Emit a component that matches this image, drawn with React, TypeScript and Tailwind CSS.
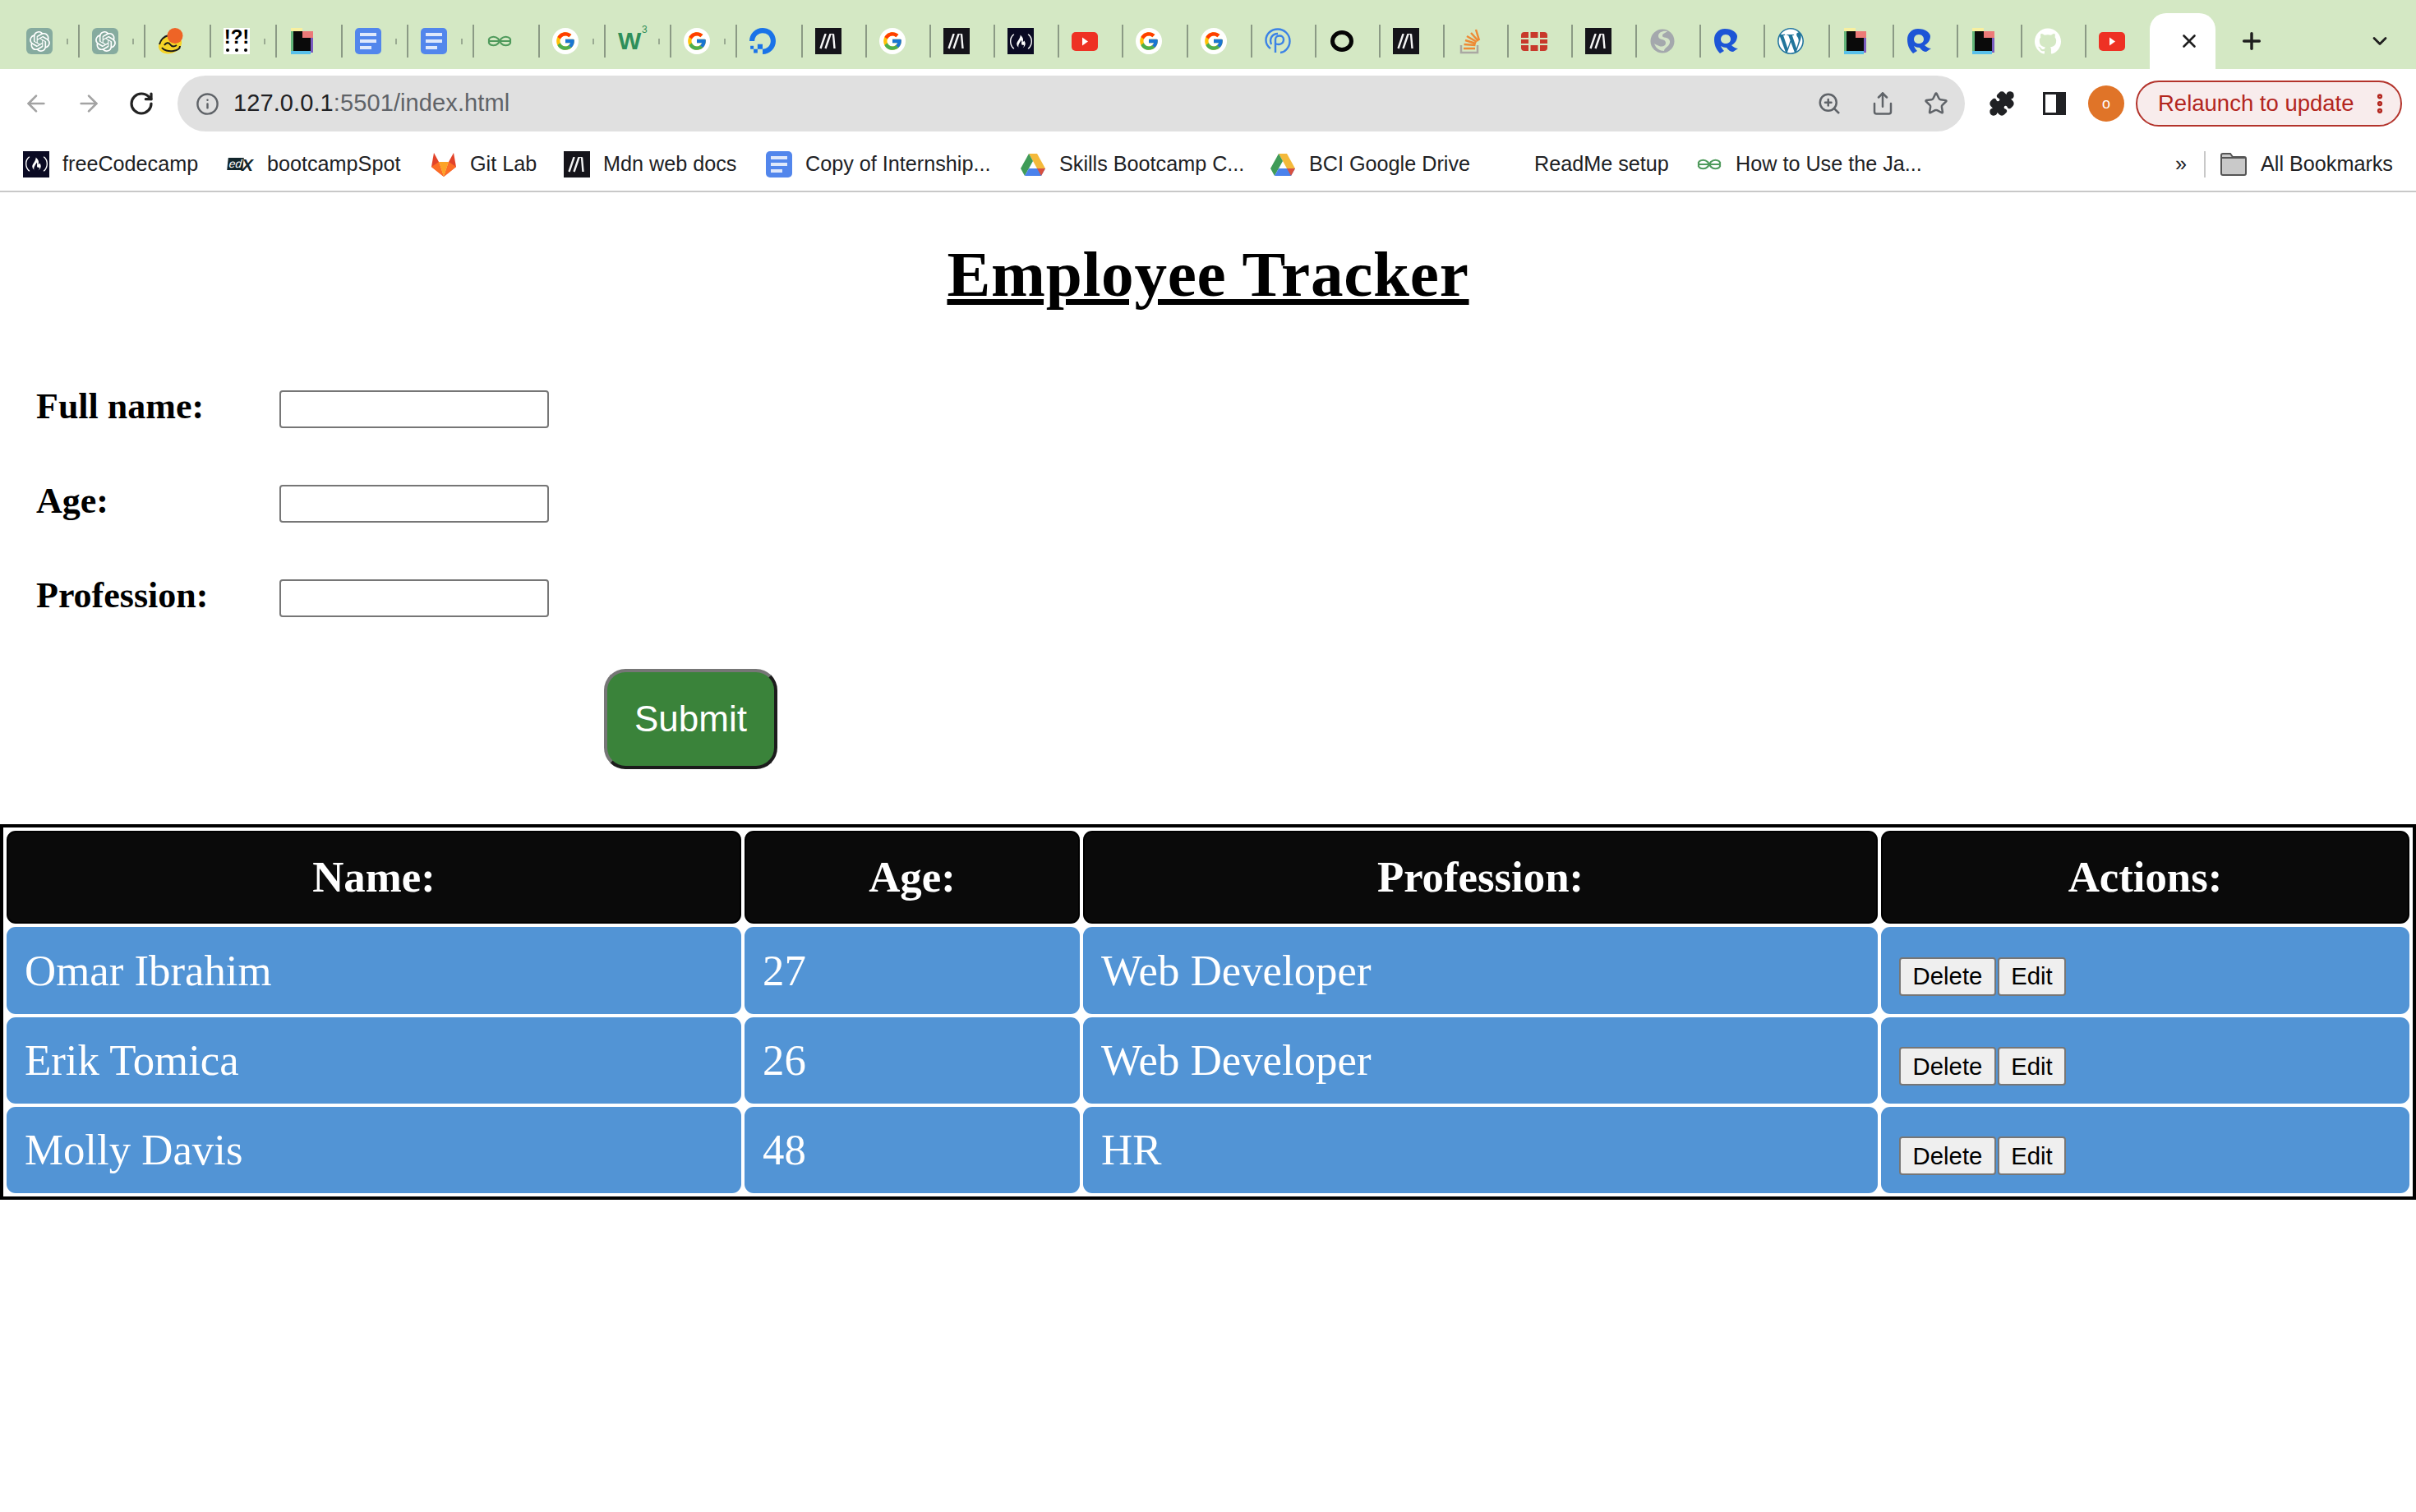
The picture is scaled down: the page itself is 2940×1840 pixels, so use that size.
import React from 'react';
import { ArrowLeft, ArrowRight, RotateCw, Info, ZoomIn, Share, Star, Puzzle, X, Plus, ChevronDown, EllipsisVertical } from 'lucide-react';
import { FcGoogle } from 'react-icons/fc';
import { SiOpenai, SiGithub, SiWordpress, SiFreecodecamp, SiDigitalocean } from 'react-icons/si';

type Kind = 'gpt' | 'loop' | 'bang' | 'file' | 'docs' | 'geek' | 'google' | 'w3' | 'ocean' | 'mdn' | 'fcc' | 'yt' | 'spiral' | 'ring' | 'so' | 'forti' | 'globe' | 'r' | 'wp' | 'github' | 'edx' | 'gitlab' | 'drive';

const Favicon: React.FC<{ kind: Kind }> = ({ kind }) => {
  switch (kind) {
    case 'gpt':
      return <div className="w-8 h-8 rounded-md bg-[#86ab9f] flex items-center justify-center"><SiOpenai size={25} color="#fff" /></div>;
    case 'loop':
      return (
        <svg viewBox="0 0 32 32" className="w-8 h-8">
          <ellipse cx="15" cy="20" rx="14.500" ry="11" fill="#f5d327" transform="rotate(-20 15 20)" />
          <path d="M2 20c2-7 7-10 11-11M5 24c2 3 8 5 14 4s8-3 8-6M8 21c2-3 5-4 7-1s5 3 8 1" fill="none" stroke="#1c1c1c" strokeWidth="2" />
          <circle cx="21" cy="9.500" r="9.500" fill="#ee6426" />
        </svg>
      );
    case 'bang':
      return (
        <div className="w-8 h-8 bg-white text-black font-['Liberation_Sans',sans-serif] font-bold text-[24px] leading-[22px] text-center">
          !?!
          <div className="mt-[3px] px-[3px] flex justify-between">
            <div className="w-[4px] h-[4px] rounded-full bg-black" />
            <div className="w-[4px] h-[4px] rounded-full bg-black" />
            <div className="w-[4px] h-[4px] rounded-full bg-black" />
          </div>
        </div>
      );
    case 'file':
      return (
        <svg viewBox="0 0 32 32" className="w-8 h-8">
          <rect x="2" y="0" width="14" height="4" fill="#f8f0a0" />
          <rect x="16" y="4" width="13" height="8" fill="#ec7a78" />
          <rect x="2" y="4" width="3" height="24" fill="#63b67a" />
          <rect x="5" y="4" width="11" height="24" fill="#0a0a0a" />
          <rect x="16" y="12" width="10" height="16" fill="#0a0a0a" />
          <rect x="26" y="12" width="3" height="18" fill="#7a5cc0" />
          <rect x="2" y="28" width="24" height="4" fill="#58c0ea" />
        </svg>
      );
    case 'docs':
      return (
        <div className="w-8 h-8 rounded-[5px] bg-[#5286ec] flex flex-col gap-[4px] px-[6px] py-[6px]">
          <div className="h-[4px] bg-[#dfe8fb]" />
          <div className="h-[4px] bg-[#dfe8fb]" />
          <div className="h-[4px] w-[14px] bg-[#dfe8fb]" />
        </div>
      );
    case 'geek':
      return (
        <svg viewBox="0 0 32 32" className="w-8 h-8" fill="none" stroke="#4f9a5c" strokeWidth="2.200">
          <path d="M3 13c3-3 8-3 11 0l4 6c3 3 8 3 11 0M29 13c-3-3-8-3-11 0l-4 6c-3 3-8 3-11 0" />
          <path d="M2 16h28M3 13v6M29 13v6" />
        </svg>
      );
    case 'google':
      return <div className="w-8 h-8 rounded-full bg-white flex items-center justify-center"><FcGoogle size={26} /></div>;
    case 'w3':
      return <div className="w-8 h-8 relative text-[#2f8f5b] font-['Liberation_Sans',sans-serif] font-bold text-[30px] leading-8">W<span className="absolute left-[29px] top-[-6px] text-[12px] leading-4 font-normal">3</span></div>;
    case 'ocean':
      return <SiDigitalocean size={32} color="#1a73e8" />;
    case 'mdn':
      return (
        <svg viewBox="0 0 32 32" className="w-8 h-8">
          <rect width="32" height="32" fill="#15141a" />
          <path d="M6.500 25L12.500 7.500M12.500 25L18.500 7.500M22 7.500L23.500 25" stroke="#f4f4f4" strokeWidth="2.400" fill="none" />
          <path d="M12 7.500h1.500M18 7.500h4.500" stroke="#f4f4f4" strokeWidth="1.200" fill="none" />
        </svg>
      );
    case 'fcc':
      return <div className="w-8 h-8 bg-[#0a0a23] flex items-center justify-center"><SiFreecodecamp size={27} color="#fff" /></div>;
    case 'yt':
      return (
        <svg viewBox="0 0 32 32" className="w-8 h-8">
          <rect x="0" y="5" width="32" height="23" rx="5" fill="#ee3124" />
          <path d="M13 11.500l7 5-7 5z" fill="#fff" />
        </svg>
      );
    case 'spiral':
      return (
        <svg viewBox="0 0 32 32" className="w-8 h-8" fill="none" stroke="#3b82e6" strokeWidth="2.400">
          <path d="M7 25C3 22 1.500 18 1.500 15 1.500 7 8 1.500 16 1.500S30.500 8 30.500 16 24 30 19 30" />
          <path d="M13 30V14c0-6 10-6 10 0 0 6-6 7-10 5" />
          <path d="M8 20C5 12 10 7 16 7" />
        </svg>
      );
    case 'ring':
      return (
        <svg viewBox="0 0 32 32" className="w-8 h-8">
          <ellipse cx="16" cy="16" rx="11.500" ry="10.500" fill="none" stroke="#050505" strokeWidth="5" />
        </svg>
      );
    case 'so':
      return (
        <svg viewBox="0 0 32 32" className="w-8 h-8">
          <path d="M5 21v9h20v-9" fill="none" stroke="#aaa8a2" strokeWidth="2.500" />
          <path d="M8 25h14M8.500 20l14 1M10 15l13 4M12 10l12 7M17 6l9 10M23 2l4 13" stroke="#ee8b35" strokeWidth="2.500" fill="none" />
        </svg>
      );
    case 'forti':
      return (
        <svg viewBox="0 0 32 32" className="w-8 h-8" fill="#c8392b">
          <path d="M0 12V9a4 4 0 0 1 4-4h5v7zM11.500 5h9v7h-9zM23 5h5a4 4 0 0 1 4 4v3h-9zM0 14h9v5H0zM23 14h9v5h-9zM0 21h9v7H4a4 4 0 0 1-4-4zM11.500 21h9v7h-9zM23 21h9v3a4 4 0 0 1-4 4h-5z" />
        </svg>
      );
    case 'globe':
      return (
        <svg viewBox="0 0 32 32" className="w-8 h-8">
          <circle cx="16" cy="16" r="14.500" fill="#a4a8ad" />
          <path d="M22 4c-5-1-11 1-11 6s9 3 9 8-6 5-8 4-5-2-6-3c2 6 7 9 12 9 0-4 8-6 7-12s-10-3-9-7c0-2 4-3 6-5z" fill="#d4e4c8" />
        </svg>
      );
    case 'r':
      return (
        <svg viewBox="0 0 32 32" className="w-8 h-8">
          <path d="M14 1C6 1 1 7 1 14c0 6 2 12 7 17l5-3c-2-2-3-4-4-6 2 1 4 2 7 2 2 3 5 5 8 5l6-4c-3 0-6-2-8-4 4-2 7-6 7-11C29 6 23 1 14 1zm1 7c4 0 6 3 6 6s-3 5-6 5-6-2-6-5 2-6 6-6z" fill="#1d55d6" fillRule="evenodd" />
        </svg>
      );
    case 'wp':
      return <div className="w-8 h-8 rounded-full bg-white flex items-center justify-center"><SiWordpress size={32} color="#21759b" /></div>;
    case 'github':
      return <SiGithub size={32} color="#fff" />;
    case 'edx':
      return (
        <div className="w-8 h-8 flex items-center font-['Liberation_Sans',sans-serif] italic">
          <span className="h-[15px] w-[19px] bg-[#12262c] -skew-x-6 text-white text-[14px] leading-[15px] text-center">ed</span>
          <span className="-ml-[2px] mt-[3px] text-[#12262c] font-bold text-[21px] leading-[18px]">X</span>
        </div>
      );
    case 'gitlab':
      return (
        <svg viewBox="0 0 32 32" className="w-8 h-8">
          <path d="M16 31L1 19 4 2l6 11z" fill="#e24329" />
          <path d="M16 31l15-12L28 2l-6 11z" fill="#e24329" />
          <path d="M16 31L1 19l9-6z" fill="#fc6d26" />
          <path d="M16 31l15-12-9-6z" fill="#fc6d26" />
          <path d="M16 31l-6-18h12z" fill="#fca326" />
        </svg>
      );
    case 'drive':
      return (
        <svg viewBox="0 0 32 32" className="w-8 h-8">
          <path d="M11 3h10l10 18H21z" fill="#f4b93a" />
          <path d="M11 3l5 9L6 30 1 21z" fill="#3f9b58" />
          <path d="M6 30l5-9h20l-5 9z" fill="#4a82ec" />
          <path d="M26 30l-5-9h10z" fill="#d8503f" />
        </svg>
      );
  }
};

const wideTabs: { kind: Kind; stub?: boolean }[] = [
  { kind: 'gpt', stub: true },
  { kind: 'gpt', stub: true },
  { kind: 'loop' },
  { kind: 'bang', stub: true },
  { kind: 'file' },
  { kind: 'docs', stub: true },
  { kind: 'docs', stub: true },
  { kind: 'geek' },
  { kind: 'google', stub: true },
  { kind: 'w3', stub: true },
  { kind: 'google', stub: true },
  { kind: 'ocean' },
];
const narrowTabs: Kind[] = ['mdn', 'google', 'mdn', 'fcc', 'yt', 'google', 'google', 'spiral', 'ring', 'mdn', 'so', 'forti', 'mdn', 'globe', 'r', 'wp', 'file', 'r', 'file', 'github'];

const bookmarks: { kind?: Kind; label: string; width: string }[] = [
  { kind: 'fcc', label: 'freeCodecamp', width: 'w-[249px]' },
  { kind: 'edx', label: 'bootcampSpot', width: 'w-[247px]' },
  { kind: 'gitlab', label: 'Git Lab', width: 'w-[162px]' },
  { kind: 'mdn', label: 'Mdn web docs', width: 'w-[246px]' },
  { kind: 'docs', label: 'Copy of Internship...', width: 'w-[309px]' },
  { kind: 'drive', label: 'Skills Bootcamp C...', width: 'w-[304px]' },
  { kind: 'drive', label: 'BCI Google Drive', width: 'w-[274px]' },
  { label: 'ReadMe setup', width: 'w-[245px]' },
  { kind: 'geek', label: 'How to Use the Ja...', width: 'w-[300px]' },
];

const employees = [
  { name: 'Omar Ibrahim', age: 27, profession: 'Web Developer', height: 'h-[106px]' },
  { name: 'Erik Tomica', age: 26, profession: 'Web Developer', height: 'h-[105px]' },
  { name: 'Molly Davis', age: 48, profession: 'HR', height: 'h-[105px]' },
];

const BrowserChrome = () => (
  <div className="font-['Liberation_Sans',sans-serif]">
    <div className="h-[84px] bg-[#d4e8c4] flex pl-[17px]">
      {wideTabs.map((tab, i) => (
        <div key={i} className="w-[80px] flex items-center pl-[15px] pt-[16px]">
          <Favicon kind={tab.kind} />
          {tab.stub && <div className="ml-[17px] w-[2px] h-[7px] bg-[#9aaa92]" />}
          <div className="ml-auto w-[2px] h-[40px] bg-[#8b9a85]" />
        </div>
      ))}
      {narrowTabs.map((kind, i) => (
        <div key={i} className="w-[78.1px] flex items-center pl-[15px] pt-[16px]">
          <Favicon kind={kind} />
          <div className="ml-auto w-[2px] h-[40px] bg-[#8b9a85]" />
        </div>
      ))}
      <div className="w-[77px] flex items-center pl-[15px] pt-[16px]">
        <Favicon kind="yt" />
      </div>
      <div className="mt-[16px] w-[80px] h-[68px] bg-white rounded-t-[20px] flex items-center justify-center pl-[16px]">
        <X size={26} strokeWidth={2.4} color="#1f1f1f" />
      </div>
      <div className="w-[88px] flex items-center justify-center pt-[16px]">
        <Plus size={32} strokeWidth={2.6} color="#1f1f1f" />
      </div>
      <div className="ml-[98px] flex items-center pt-[16px]">
        <ChevronDown size={28} strokeWidth={2.4} color="#1f1f1f" />
      </div>
    </div>

    <div className="h-[84px] bg-white flex items-center pl-[28px]">
      <ArrowLeft size={32} strokeWidth={2} color="#a3a3a3" />
      <ArrowRight size={32} strokeWidth={2} color="#a3a3a3" className="ml-[32px]" />
      <RotateCw size={32} strokeWidth={2.4} color="#222" className="ml-[32px]" />
      <div className="ml-[28px] w-[2175px] h-[68px] rounded-full bg-[#e0e0e0] flex items-center pl-[22px] pr-[20px]">
        <Info size={29} strokeWidth={2} color="#5f6368" />
        <span className="ml-[17px] text-[29px] tracking-[0.1px] text-[#5f6368] whitespace-nowrap"><span className="text-[#202124]">127.0.0.1</span>:5501/index.html</span>
        <ZoomIn size={30} strokeWidth={2} color="#5f6368" className="ml-auto" />
        <Share size={30} strokeWidth={2} color="#5f6368" className="ml-[35px]" />
        <Star size={30} strokeWidth={2} color="#5f6368" className="ml-[35px]" />
      </div>
      <Puzzle size={32} fill="#202124" color="#202124" className="ml-[29px]" />
      <svg viewBox="0 0 28 28" className="w-[28px] h-[28px] ml-[34px]">
        <rect x="1.500" y="1.500" width="25" height="25" fill="#fff" stroke="#202124" strokeWidth="3" />
        <rect x="16" y="2" width="10" height="24" fill="#202124" />
      </svg>
      <div className="ml-[27px] w-[44px] h-[44px] rounded-full bg-[#e07428] text-white text-[18px] flex items-center justify-center">o</div>
      <div className="ml-[14px] w-[324px] h-[56px] rounded-full border-2 border-[#b3332b] bg-[#f8ecec] flex items-center pl-[25px] text-[#b3261e] text-[27.5px] whitespace-nowrap">
        Relaunch to update
        <EllipsisVertical size={30} strokeWidth={3} className="ml-auto mr-[10px]" />
      </div>
    </div>

    <div className="h-[66px] bg-white border-b-2 border-[#c8c8c8] flex items-start pl-[28px] text-[25.2px] text-[#202124]">
      <div className="h-[64px] flex items-center">
        {bookmarks.map((b) => (
          <div key={b.label} className={`${b.width} flex items-center gap-[16px] whitespace-nowrap`}>
            <div className="w-8 h-8">{b.kind && <Favicon kind={b.kind} />}</div>
            <span>{b.label}</span>
          </div>
        ))}
        <span className="ml-[283px] w-[35px]">»</span>
        <div className="w-[2px] h-[32px] bg-[#c8c8c8]" />
        <svg viewBox="0 0 32 28" className="ml-[18px] w-[32px] h-[28px]">
          <path d="M1 3a2 2 0 0 1 2-2h9l3 4h14a2 2 0 0 1 2 2v18a2 2 0 0 1-2 2H3a2 2 0 0 1-2-2z" fill="#c9c9c9" stroke="#555" strokeWidth="2" />
          <path d="M1 6h30" stroke="#555" strokeWidth="2" />
        </svg>
        <span className="ml-[17px] whitespace-nowrap">All Bookmarks</span>
      </div>
    </div>
  </div>
);

const fields = ['Full name:', 'Age:', 'Profession:'];

export default function App() {
  return (
    <div className="min-h-[1840px] bg-white text-black font-['Liberation_Serif',serif]">
      <BrowserChrome />

      <h1 className="pt-[54px] text-center text-[79.2px] leading-[91px] tracking-[0.7px] font-bold underline">Employee Tracker</h1>

      <form className="mt-[90px] pl-[44px]" onSubmit={(e) => e.preventDefault()}>
        <div className="flex flex-col gap-[64px]">
          {fields.map((field) => (
            <div key={field} className="h-[51px] flex items-start">
              <label className="w-[296px] text-[44px] leading-[51px] font-bold">{field}</label>
              <input type="text" className="mt-[6px] w-[328px] h-[46px] border-2 border-[#767676] rounded-[4px] bg-white" />
            </div>
          ))}
        </div>
        <button className="mt-[64px] ml-[691px] block w-[211px] h-[122px] rounded-[26px] border-4 border-t-[#767676] border-l-[#767676] border-b-[#1c1c1c] border-r-[#1c1c1c] bg-[#3a833a] text-white text-[44px] font-['Liberation_Sans',sans-serif]">
          Submit
        </button>
      </form>

      <table className="mt-[67px] w-full table-fixed border-separate border-spacing-[4px] border-4 border-black">
        <colgroup>
          <col className="w-[894px]" />
          <col className="w-[408px]" />
          <col className="w-[967px]" />
          <col />
        </colgroup>
        <thead>
          <tr className="text-white text-[52.8px] leading-[61px]">
            {['Name:', 'Age:', 'Profession:', 'Actions:'].map((h) => (
              <th key={h} className="h-[113px] bg-[#0a0a0a] border-2 border-black rounded-[11px] text-center font-bold">{h}</th>
            ))}
          </tr>
        </thead>
        <tbody>
          {employees.map((emp) => (
            <tr key={emp.name} className="text-white text-[52.8px] leading-[61px]">
              <td className={`${emp.height} bg-[#5294d5] rounded-[11px] px-[22px]`}>{emp.name}</td>
              <td className="bg-[#5294d5] rounded-[11px] px-[22px]">{emp.age}</td>
              <td className="bg-[#5294d5] rounded-[11px] px-[22px]">{emp.profession}</td>
              <td className="bg-[#5294d5] rounded-[11px] px-[22px]">
                <button className="w-[118px] h-[47px] border-2 border-[#767676] rounded-[4px] bg-[#efefef] text-black text-[29.33px] leading-[1] font-['Liberation_Sans',sans-serif]">Delete</button>
                <button className="ml-[2px] w-[83px] h-[47px] border-2 border-[#767676] rounded-[4px] bg-[#efefef] text-black text-[29.33px] leading-[1] font-['Liberation_Sans',sans-serif]">Edit</button>
              </td>
            </tr>
          ))}
        </tbody>
      </table>
    </div>
  );
}
